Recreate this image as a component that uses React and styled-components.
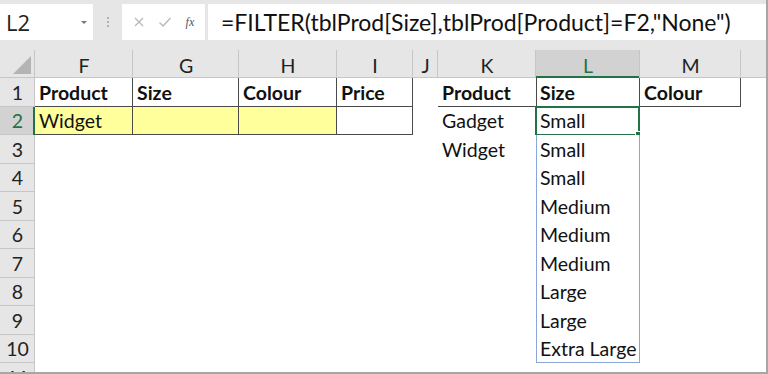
import React from "react";
import styled, { createGlobalStyle } from "styled-components";

const Global = createGlobalStyle`
  html, body {
    margin: 0;
    padding: 0;
    background: #ffffff;
  }
  body {
    font-family: "Lato", "Liberation Sans", sans-serif;
  }
`;

const Frame = styled.div`
  width: 768px;
  height: 374px;
  box-sizing: border-box;
  overflow: hidden;
  border-right: 2px solid #a6a6a6;
  border-bottom: 2px solid #a6a6a6;
  background: #ffffff;
`;

const FormulaBar = styled.div`
  height: 50px;
  background: #e6e6e6;
  display: flex;
  align-items: flex-start;
  padding-top: 4px;
  box-sizing: border-box;
`;

const NameBox = styled.div`
  width: 93px;
  height: 36px;
  background: #ffffff;
  display: flex;
  align-items: center;
  justify-content: space-between;
  padding: 0 6px 0 6px;
  box-sizing: border-box;
  font-family: "Open Sans", "Liberation Sans", sans-serif;
  font-size: 22px;
  color: #222;
`;

const Caret = styled.span`
  width: 0;
  height: 0;
  border-left: 3px solid transparent;
  border-right: 3px solid transparent;
  border-top: 3px solid #777;
`;

const Grip = styled.div`
  width: 29px;
  height: 36px;
  display: flex;
  flex-direction: column;
  align-items: center;
  justify-content: center;
  gap: 2px;

  & span {
    width: 2px;
    height: 2px;
    background: #a0a0a0;
    border-radius: 1px;
  }
`;

const FxBox = styled.div`
  width: 83px;
  height: 36px;
  background: #ffffff;
  display: flex;
  align-items: center;
  justify-content: space-around;
  padding: 0 4px;
  box-sizing: border-box;
  color: #b0b0b0;
`;

const FxText = styled.span`
  font-family: "Liberation Serif", serif;
  font-style: italic;
  font-size: 12px;
  color: #555;
`;

const FormulaInput = styled.div`
  flex: 1;
  height: 36px;
  margin-left: 3px;
  background: #ffffff;
  display: flex;
  align-items: center;
  padding-left: 13px;
  box-sizing: border-box;
  font-size: 23px;
  color: #111;
  white-space: nowrap;
`;

const Sheet = styled.div`
  display: grid;
  grid-template-columns: 35px 98px 106px 98px 76px 25px 98px 104px 101px 27px;
  grid-template-rows: 28px repeat(11, 28.5px);
`;

const ColHead = styled.div`
  background: ${(p) => (p.$active ? "#d2d2d2" : "#e6e6e6")};
  color: ${(p) => (p.$active ? "#217346" : "#222")};
  box-shadow: inset -1px 0 0 #c6c6c6,
    inset 0 ${(p) => (p.$active ? "-2px 0 0 #217346" : "-1px 0 0 #c6c6c6")};
  display: flex;
  align-items: center;
  justify-content: center;
  font-size: 19.5px;
  padding-top: 2px;
  box-sizing: border-box;
`;

const Corner = styled.div`
  background: #e6e6e6;
  box-shadow: inset -1px 0 0 #c6c6c6, inset 0 -1px 0 #c6c6c6;
  position: relative;

  &::after {
    content: "";
    position: absolute;
    right: 4px;
    bottom: 4px;
    width: 0;
    height: 0;
    border-left: 18px solid transparent;
    border-bottom: 18px solid #b4b4b4;
  }
`;

const RowHead = styled.div`
  background: ${(p) => (p.$active ? "#d2d2d2" : "#e6e6e6")};
  color: ${(p) => (p.$active ? "#217346" : "#222")};
  box-shadow: inset ${(p) => (p.$active ? "-2px 0 0 #217346" : "-1px 0 0 #c6c6c6")},
    inset 0 -1px 0 #c6c6c6;
  display: flex;
  align-items: center;
  justify-content: center;
  font-size: 19.5px;
  box-sizing: border-box;
`;

const Cell = styled.div`
  position: relative;
  background: ${(p) => p.$fill || "#ffffff"};
  font-weight: ${(p) => (p.$bold ? 700 : 400)};
  font-size: 19.5px;
  color: #111;
  display: flex;
  align-items: center;
  padding: 0 0 0 4px;
  box-sizing: border-box;
  white-space: nowrap;
  box-shadow: ${(p) =>
    [
      p.$right && `inset -1px 0 0 ${p.$right}`,
      p.$bottom && `inset 0 -1px 0 ${p.$bottom}`,
      p.$left && `inset 1px 0 0 ${p.$left}`,
      p.$top && `inset 0 1px 0 ${p.$top}`,
    ]
      .filter(Boolean)
      .join(", ") || "none"};
`;

const Selected = styled.div`
  position: absolute;
  left: -1px;
  top: -1px;
  right: 0;
  bottom: -1px;
  border: 2px solid #217346;
  pointer-events: none;

  &::after {
    content: "";
    position: absolute;
    right: -4px;
    bottom: -4px;
    width: 5px;
    height: 5px;
    background: #217346;
    border: 1px solid #fff;
  }
`;

const cols = ["F", "G", "H", "I", "J", "K", "L", "M", ""];
const DARK = "#4a4a4a";
const BLUE = "#8aa6d8";
const YELLOW = "#ffff9c";
const sizes = ["Small", "Small", "Small", "Medium", "Medium", "Medium", "Large", "Large", "Extra Large"];

function cellProps(row, col) {
  const p = { text: "" };
  // table F1:I2
  if (row <= 2 && col <= 3) {
    p.$right = DARK;
    p.$bottom = DARK;
    if (row === 1) p.$bold = true;
    if (row === 2 && col <= 2) p.$fill = YELLOW;
    if (row === 1) p.text = ["Product", "Size", "Colour", "Price"][col];
    if (row === 2 && col === 0) p.text = "Widget";
  }
  // header K1:M1
  if (row === 1 && col >= 5 && col <= 7) {
    p.$bottom = DARK;
    p.$bold = true;
    p.text = ["Product", "Size", "Colour"][col - 5];
    if (col === 7) p.$right = DARK;
    if (col === 6) {
      p.$right = DARK;
      p.$left = DARK;
    }
  }
  if (col === 5 && row === 2) p.text = "Gadget";
  if (col === 5 && row === 3) p.text = "Widget";
  // spill L2:L10
  if (col === 6 && row >= 2 && row <= 10) {
    p.text = sizes[row - 2];
    p.$left = BLUE;
    p.$right = BLUE;
    if (row === 10) p.$bottom = BLUE;
  }
  return p;
}

function XIcon() {
  return (
    <svg width="12" height="12" viewBox="0 0 12 12">
      <path d="M2 2 L10 10 M10 2 L2 10" stroke="#b8b8b8" strokeWidth="1.3" fill="none" />
    </svg>
  );
}

function CheckIcon() {
  return (
    <svg width="14" height="12" viewBox="0 0 14 12">
      <path d="M1.5 6.5 L5 10 L12.5 2" stroke="#b8b8b8" strokeWidth="1.4" fill="none" />
    </svg>
  );
}

export default function App() {
  const rows = [];
  for (let r = 1; r <= 11; r++) {
    rows.push(
      <RowHead key={"rh" + r} $active={r === 2}>
        {r}
      </RowHead>
    );
    cols.forEach((c, ci) => {
      const { text, ...rest } = cellProps(r, ci);
      rows.push(
        <Cell key={r + "-" + ci} {...rest}>
          {text}
          {r === 2 && ci === 6 && <Selected />}
        </Cell>
      );
    });
  }

  return (
    <Frame>
      <Global />
      <FormulaBar>
        <NameBox>
          L2
          <Caret />
        </NameBox>
        <Grip>
          <span />
          <span />
          <span />
        </Grip>
        <FxBox>
          <XIcon />
          <CheckIcon />
          <FxText>fx</FxText>
        </FxBox>
        <FormulaInput>=FILTER(tblProd[Size],tblProd[Product]=F2,"None")</FormulaInput>
      </FormulaBar>
      <Sheet>
        <Corner />
        {cols.map((c, i) => (
          <ColHead key={"ch" + i} $active={c === "L"}>
            {c}
          </ColHead>
        ))}
        {rows}
      </Sheet>
    </Frame>
  );
}
